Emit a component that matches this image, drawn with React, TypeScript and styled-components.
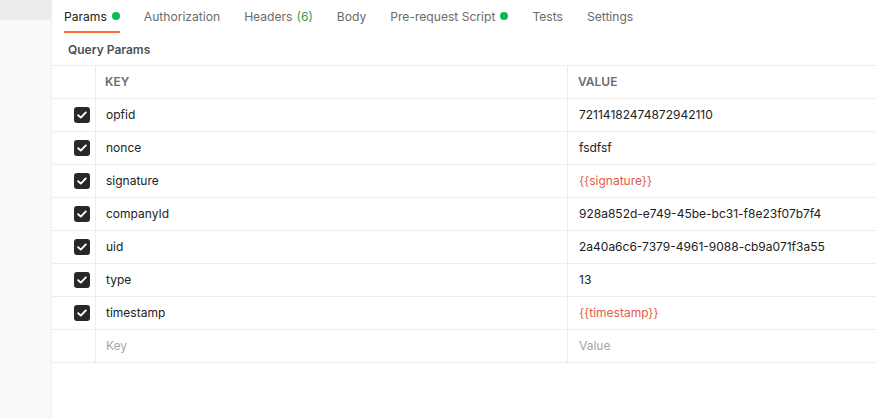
import React from "react";
import styled, { createGlobalStyle } from "styled-components";

const GlobalStyle = createGlobalStyle`
  html, body {
    margin: 0;
    padding: 0;
    background: #ffffff;
  }
  body {
    font-family: Inter, "Noto Sans", sans-serif;
  }
`;

interface Param {
  key: string;
  value: string;
  variable?: boolean;
}

const params: Param[] = [
  { key: "opfid", value: "72114182474872942110" },
  { key: "nonce", value: "fsdfsf" },
  { key: "signature", value: "{{signature}}", variable: true },
  { key: "companyId", value: "928a852d-e749-45be-bc31-f8e23f07b7f4" },
  { key: "uid", value: "2a40a6c6-7379-4961-9088-cb9a071f3a55" },
  { key: "type", value: "13" },
  { key: "timestamp", value: "{{timestamp}}", variable: true },
];

const tabs = [
  { label: "Params", dot: true, active: true },
  { label: "Authorization" },
  { label: "Headers", count: 6 },
  { label: "Body" },
  { label: "Pre-request Script", dot: true },
  { label: "Tests" },
  { label: "Settings" },
];

const App = () => {
  return (
    <>
      <GlobalStyle />
      <Page>
        <Sidebar>
          <SidebarTop />
        </Sidebar>
        <Main>
          <TabBar>
            {tabs.map((t) => (
              <Tab key={t.label} $active={!!t.active}>
                {t.label}
                {t.count !== undefined && <Count>({t.count})</Count>}
                {t.dot && <Dot />}
              </Tab>
            ))}
          </TabBar>
          <SectionTitle>Query Params</SectionTitle>
          <Table>
            <Row>
              <CheckCell />
              <KeyCell>
                <HeadText>KEY</HeadText>
              </KeyCell>
              <ValueCell>
                <HeadText>VALUE</HeadText>
              </ValueCell>
            </Row>
            {params.map((p) => (
              <Row key={p.key}>
                <CheckCell>
                  <Checkbox>
                    <svg width="10" height="8" viewBox="0 0 10 8" fill="none">
                      <path
                        d="M1.2 4.2 L3.8 6.6 L8.8 1.4"
                        stroke="#fff"
                        strokeWidth="1.9"
                        strokeLinecap="round"
                        strokeLinejoin="round"
                      />
                    </svg>
                  </Checkbox>
                </CheckCell>
                <KeyCell>
                  <CellText>{p.key}</CellText>
                </KeyCell>
                <ValueCell>
                  <CellText $variable={p.variable}>{p.value}</CellText>
                </ValueCell>
              </Row>
            ))}
            <Row>
              <CheckCell />
              <KeyCell>
                <Placeholder>Key</Placeholder>
              </KeyCell>
              <ValueCell>
                <Placeholder>Value</Placeholder>
              </ValueCell>
            </Row>
          </Table>
        </Main>
      </Page>
    </>
  );
};

const Page = styled.div`
  display: flex;
  width: 876px;
  height: 418px;
  overflow: hidden;
`;

const Sidebar = styled.div`
  width: 51px;
  flex-shrink: 0;
  background: #f9f9f9;
  border-right: 1px solid #ededed;
`;

const SidebarTop = styled.div`
  height: 20px;
  background: #ececec;
`;

const Main = styled.div`
  flex: 1;
  display: flex;
  flex-direction: column;
  min-width: 0;
`;

const TabBar = styled.div`
  display: flex;
  gap: 24px;
  padding-left: 12px;
  height: 33px;
`;

const Tab = styled.div<{ $active: boolean }>`
  display: flex;
  align-items: center;
  gap: 5px;
  padding-top: 1px;
  font-size: 12.1px;
  color: ${(p) => (p.$active ? "#212121" : "#6b6b6b")};
  border-bottom: 2px solid ${(p) => (p.$active ? "#ff6c37" : "transparent")};
  box-sizing: border-box;
  white-space: nowrap;
`;

const Count = styled.span`
  color: #3a9a4e;
  margin-left: -1px;
`;

const Dot = styled.span`
  width: 8px;
  height: 8px;
  border-radius: 50%;
  background: #0cbb52;
`;

const SectionTitle = styled.div`
  height: 32px;
  display: flex;
  align-items: center;
  padding-left: 16px;
  font-size: 12px;
  font-weight: 600;
  color: #505050;
`;

const Table = styled.div`
  border-top: 1px solid #ededed;
`;

const Row = styled.div`
  display: grid;
  grid-template-columns: 44px 472px 1fr;
  height: 33px;
  border-bottom: 1px solid #ededed;
  box-sizing: border-box;
`;

const CheckCell = styled.div`
  display: flex;
  align-items: center;
  justify-content: flex-end;
  padding-right: 5px;
  border-right: 1px solid #ededed;
`;

const KeyCell = styled.div`
  display: flex;
  align-items: center;
  padding-left: 9px;
  padding-bottom: 1px;
  border-right: 1px solid #ededed;
`;

const ValueCell = styled.div`
  display: flex;
  align-items: center;
  padding-left: 10px;
  padding-bottom: 1px;
`;

const Checkbox = styled.div`
  width: 16px;
  height: 16px;
  border-radius: 3px;
  background: #282828;
  display: flex;
  align-items: center;
  justify-content: center;
`;

const HeadText = styled.span`
  font-size: 12px;
  font-weight: 600;
  color: #6b6b6b;
`;

const CellText = styled.span<{ $variable?: boolean }>`
  font-size: 12px;
  margin-left: 1px;
  color: ${(p) => (p.$variable ? "#e35b46" : "#212121")};
`;

const Placeholder = styled.span`
  font-size: 12px;
  margin-left: 1px;
  color: #a6a6a6;
`;

export default App;
